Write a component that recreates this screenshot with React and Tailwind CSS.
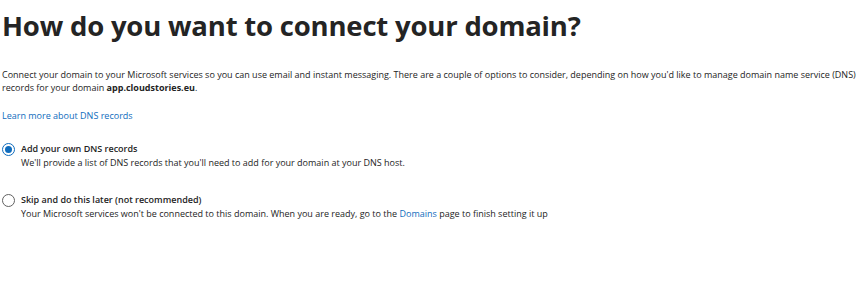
export default function App() {
  const font = { fontFamily: '"Open Sans", "Noto Sans", sans-serif' };

  return (
    <div className="w-[865px] h-[285px] bg-white text-[#242424] overflow-hidden" style={font}>
      <div className="pl-[2px] pt-[9px]">
        {/* HEADER */}
        <h1 className="text-[27.5px] leading-[34px] font-bold tracking-[-0.2px]">
          How do you want to connect your domain?
        </h1>

        {/* INTRO */}
        <p className="mt-[25px] text-[9px] leading-[13px] text-[#242424]">
          Connect your domain to your Microsoft services so you can use email and instant messaging. There are a couple of options to consider, depending on how you'd like to manage domain name service (DNS)
          <br />
          records for your domain <b>app.cloudstories.eu</b>.
        </p>

        <a className="block mt-[15px] text-[9px] leading-[13px] text-[#0f6cbd]">
          Learn more about DNS records
        </a>

        {/* OPTIONS */}
        <div className="mt-[20px] flex flex-col gap-[24px]">
          <div className="flex gap-[6px]">
            <span className="mt-[1px] w-[13px] h-[13px] rounded-full border border-[#0f6cbd] flex items-center justify-center shrink-0">
              <span className="w-[7px] h-[7px] rounded-full bg-[#0f6cbd]" />
            </span>
            <div>
              <div className="text-[9px] leading-[14px] font-semibold">Add your own DNS records</div>
              <div className="text-[9px] leading-[13px]">
                We'll provide a list of DNS records that you'll need to add for your domain at your DNS host.
              </div>
            </div>
          </div>

          <div className="flex gap-[6px]">
            <span className="mt-[1px] w-[13px] h-[13px] rounded-full border border-[#616161] shrink-0" />
            <div>
              <div className="text-[9px] leading-[14px] font-semibold">Skip and do this later (not recommended)</div>
              <div className="text-[9px] leading-[13px]">
                Your Microsoft services won't be connected to this domain. When you are ready, go to the{" "}
                <a className="text-[#0f6cbd]">Domains</a> page to finish setting it up
              </div>
            </div>
          </div>
        </div>
      </div>
    </div>
  );
}
